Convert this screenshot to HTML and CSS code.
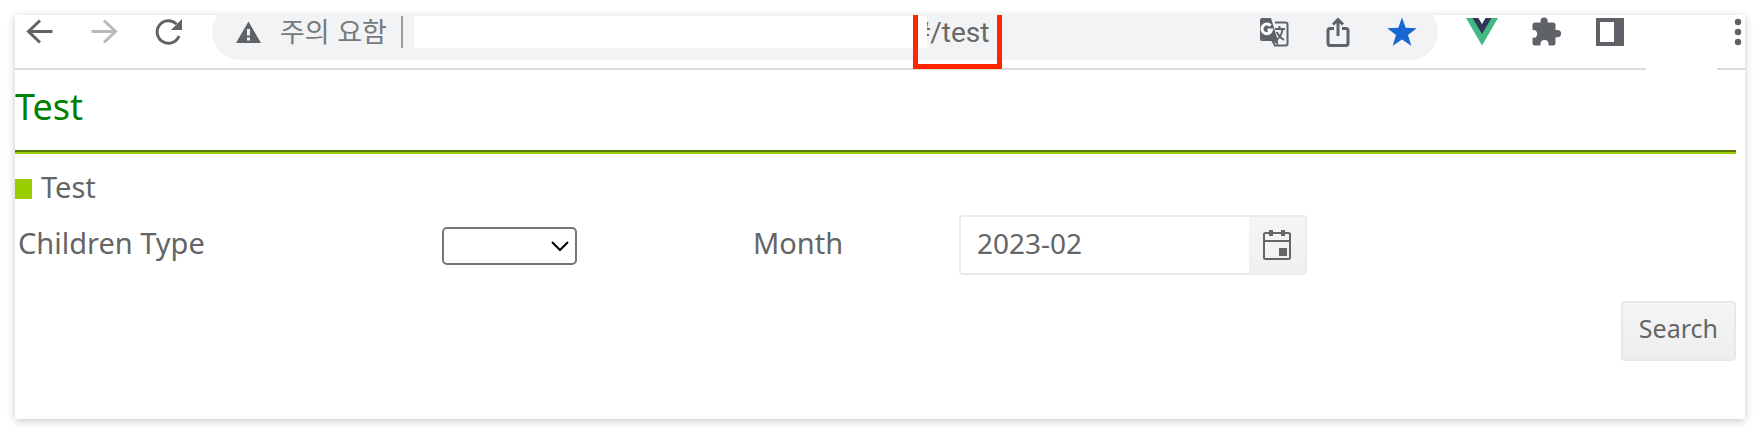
FILE: index.html
```html
<!DOCTYPE html>
<html lang="ko">
<head>
<meta charset="utf-8">
<title>Test</title>
<link rel="stylesheet" href="styles.css">
</head>
<body>
<div class="window">
  <header class="toolbar">
    <nav class="group" aria-label="Navigation">
      <button class="icon-btn" aria-label="Back"><svg viewBox="0 0 32 32"><path class="line" d="M28.500 15.500H4.500M16 4.500L4.500 15.500L16 26.500"/></svg></button>
      <button class="icon-btn faded" aria-label="Forward"><svg viewBox="0 0 32 32"><path class="line" d="M3.500 15.500H27.500M16 4.500L27.500 15.500L16 26.500"/></svg></button>
      <button class="icon-btn" aria-label="Reload"><svg viewBox="0 0 32 32"><path class="line" d="M27 20A11.300 11.300 0 1 1 24.500 8"/><path d="M30 3V14H19Z"/></svg></button>
    </nav>
    <div class="address">
      <svg class="icon" viewBox="0 0 32 32"><path fill-rule="evenodd" d="M4 27L16.500 5.500L29 27ZM15 13V19.500H18V13ZM15 21.500V24.500H18V21.500Z"/></svg>
      <span class="warning">주의 요함</span>
      <span class="divider"></span>
      <span class="mask"></span>
      <span class="url"><span class="url-text">#/test</span><span class="highlight"></span></span>
      <span class="spacer"></span>
      <div class="group">
        <button class="icon-btn" aria-label="Translate"><svg viewBox="0 0 32 32"><path class="thin" d="M17 6.500H27.500Q29.500 6.500 29.500 8.500V27.500Q29.500 29.500 27.500 29.500H17L14 24"/><path d="M4 2H13L20 25V29L15 25H4Q2 25 2 23V4Q2 2 4 2Z"/><path class="thin" d="M17 13H27M21.500 10V13M17 25C22 22 24 18 24.500 13M19 16C20 20 23 22 26 24"/><path class="g" d="M12.500 9.800A4.800 4.800 0 1 0 13.500 14H9.500"/></svg></button>
        <button class="icon-btn" aria-label="Share"><svg viewBox="0 0 32 32"><path class="line" d="M12 12.500H8Q6 12.500 6 14.500V27Q6 29.500 8 29.500H24Q26 29.500 26 27V14.500Q26 12.500 24 12.500H20M16 20V4M11 8.500L16 3.500L21 8.500"/></svg></button>
        <button class="icon-btn star" aria-label="Bookmark"><svg viewBox="0 0 32 32"><path d="M16 1.500L19.700 11.800L30.700 12.200L22 18.900L25.300 29.700L16 23.400L6.700 29.700L10 18.900L1.300 12.200L12.300 11.800Z"/></svg></button>
      </div>
    </div>
    <div class="group">
      <button class="icon-btn" aria-label="Vue devtools"><svg viewBox="0 0 32 32"><path fill="#42b983" d="M0 2H32L16 29.500Z"/><path fill="#2f3555" d="M6.500 2H12.500L16 8L19.500 2H25.500L16 18Z"/><path fill="#fff" d="M12.500 2H19.500L16 8Z"/></svg></button>
      <button class="icon-btn" aria-label="Extensions"><svg viewBox="0 0 32 32"><path d="M5 6.500H10.500V5A3.600 3.600 0 0 1 17.700 5V6.500H23Q25.500 6.500 25.500 9V14H27.500A3.600 3.600 0 0 1 27.500 21.200H25.500V27Q25.500 29.500 23 29.500H18.500V28A4 4 0 0 0 10.500 28V29.500H5Q2.500 29.500 2.500 27V21.800H4A4 4 0 0 0 4 14H2.500V9Q2.500 6.500 5 6.500Z"/></svg></button>
      <button class="icon-btn" aria-label="Side panel"><svg viewBox="0 0 32 32"><path fill-rule="evenodd" d="M2 2H30V30H2ZM6 6V26H20V6Z"/></svg></button>
    </div>
    <span class="profile"></span>
    <button class="menu" aria-label="Menu"><svg viewBox="0 0 8 32"><circle cx="4" cy="6" r="3.200"/><circle cx="4" cy="16" r="3.200"/><circle cx="4" cy="26" r="3.200"/></svg></button>
  </header>
  <main class="page">
    <h1 class="title">Test</h1>
    <h2 class="subtitle">Test</h2>
    <form class="filters">
      <label for="type">Children Type</label>
      <div><select id="type" class="select"><option></option></select></div>
      <label for="month">Month</label>
      <div class="datepicker">
        <input id="month" class="date" type="text" value="2023-02">
        <button type="button" class="calendar" aria-label="Open calendar"><svg viewBox="0 0 30 32"><rect class="thin" x="2" y="4" width="26" height="26" rx="1.500"/><path class="thin" d="M2 12H28"/><path d="M7 1H11V7H7ZM19 1H23V7H19ZM17 19H25V27H17Z"/></svg></button>
      </div>
    </form>
    <div class="actions"><button class="search">Search</button></div>
  </main>
</div>
</body>
</html>
```
FILE: styles.css
```css
* { box-sizing: border-box; }
body {
  margin: 0;
  padding: 15px;
  background: #fff;
  color: #656565;
  font-family: "Noto Sans", "Noto Sans CJK KR", sans-serif;
  font-size: 29px;
}
button, input, select { font: inherit; color: inherit; margin: 0; }
button { border: 0; background: none; padding: 0; }
svg { display: block; fill: currentColor; }
.line, .thin, .g { fill: none; stroke: currentColor; stroke-width: 3; }
.thin { stroke-width: 2; }
.g { stroke: #fff; }
.window {
  overflow: hidden;
  background: #fff;
  box-shadow: 0 2px 8px rgba(0, 0, 0, .22);
}
.toolbar {
  display: flex;
  align-items: flex-start;
  height: 55px;
  padding: 1px 3px 0 9px;
  border-bottom: 2px solid #dadada;
  color: #5f6368;
}
.group { display: flex; gap: 32px; }
.icon-btn, .icon, .icon-btn svg { width: 32px; height: 32px; flex: none; }
.faded { color: #bababa; }
.star { color: #1967d2; }
.address {
  display: flex;
  align-items: center;
  flex: 1;
  height: 56px;
  margin: -12px 28px 0;
  padding: 0 20px;
  border-radius: 28px;
  background: #f1f3f4;
}
.warning {
  margin: 0 14px 0 16px;
  padding-bottom: 2px;
  color: #747a7e;
  font: 27px/30px "Noto Sans CJK KR", sans-serif;
  white-space: nowrap;
}
.divider { width: 2px; height: 32px; background: #9a9da0; }
.mask {
  position: relative;
  z-index: 1;
  flex: 514;
  height: 32px;
  margin-left: 11px;
  background: #fff;
}
.url {
  position: relative;
  display: flex;
  align-items: center;
  align-self: stretch;
  margin-left: -14px;
  font: 28px Roboto, sans-serif;
  color: #686868;
}
.highlight {
  position: absolute;
  z-index: 2;
  top: 0;
  bottom: -9px;
  left: 0;
  right: -13px;
  border: 5px solid #ff2600;
}
.spacer { flex: 269; }
.profile {
  align-self: stretch;
  width: 71px;
  margin: 0 17px -2px 20px;
  background: #fff;
}
.menu, .menu svg { width: 8px; height: 32px; }
.page { padding: 0 9px 58px 0; }
.title {
  height: 84px;
  margin: 0;
  padding-top: 11px;
  border-bottom: 4px groove #9acd00;
  color: #008000;
  font-size: 36px;
  font-weight: 400;
  line-height: 52px;
}
.subtitle {
  display: flex;
  align-items: center;
  gap: 9px;
  margin: 11px 0 0;
  font-size: 29px;
  font-weight: 400;
  line-height: 44px;
}
.subtitle::before { content: ""; width: 17px; height: 20px; margin-top: 4px; background: #9acd00; }
.filters {
  display: grid;
  grid-template-columns: 427fr 308fr 209fr 777fr;
  align-items: center;
  margin-top: 6px;
}
.filters label { padding: 0 0 4px 3px; line-height: 56px; white-space: nowrap; }
.select {
  display: block;
  width: 135px;
  height: 38px;
  margin-top: 1px;
  border: 2px solid #767676;
  border-radius: 5px;
  color: #000;
  appearance: none;
  background: #fff url("data:image/svg+xml,%3Csvg xmlns='http://www.w3.org/2000/svg' width='18' height='12'%3E%3Cpath d='M1 2L9 10L17 2' fill='none' stroke='%23000' stroke-width='2'/%3E%3C/svg%3E") no-repeat right 6px center;
}
.datepicker {
  display: flex;
  width: 348px;
  height: 60px;
  border: 2px solid #ebebeb;
  border-radius: 4px;
  overflow: hidden;
}
.date {
  flex: 1;
  min-width: 0;
  padding: 0 16px 5px;
  border: 0;
  font-size: 28px;
}
.calendar {
  display: grid;
  place-items: center;
  width: 56px;
  background: linear-gradient(#f5f5f5, #f0f0f0);
}
.calendar svg { width: 30px; height: 32px; }
.actions { display: flex; justify-content: flex-end; margin-top: 26px; }
.search {
  height: 60px;
  padding: 0 16px 6px;
  border: 2px solid #e8e8e8;
  border-radius: 4px;
  background: linear-gradient(#f5f5f5, #eee);
  font-size: 25px;
}
```
